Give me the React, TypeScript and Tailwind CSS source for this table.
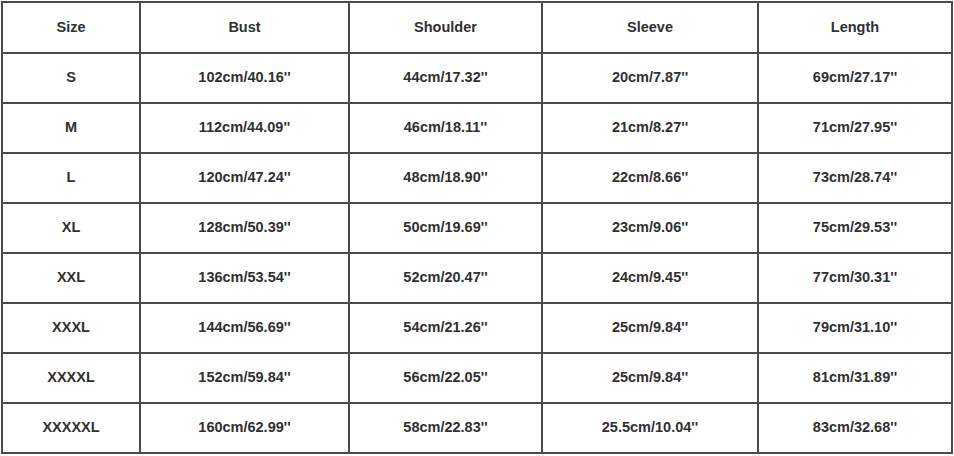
const headers = ["Size", "Bust", "Shoulder", "Sleeve", "Length"];

const rows = [
  ["S", "102cm/40.16''", "44cm/17.32''", "20cm/7.87''", "69cm/27.17''"],
  ["M", "112cm/44.09''", "46cm/18.11''", "21cm/8.27''", "71cm/27.95''"],
  ["L", "120cm/47.24''", "48cm/18.90''", "22cm/8.66''", "73cm/28.74''"],
  ["XL", "128cm/50.39''", "50cm/19.69''", "23cm/9.06''", "75cm/29.53''"],
  ["XXL", "136cm/53.54''", "52cm/20.47''", "24cm/9.45''", "77cm/30.31''"],
  ["XXXL", "144cm/56.69''", "54cm/21.26''", "25cm/9.84''", "79cm/31.10''"],
  ["XXXXL", "152cm/59.84''", "56cm/22.05''", "25cm/9.84''", "81cm/31.89''"],
  ["XXXXXL", "160cm/62.99''", "58cm/22.83''", "25.5cm/10.04''", "83cm/32.68''"],
];

function Cell({ children, head }: { children: React.ReactNode; head?: boolean }) {
  return (
    <div
      className={
        (head ? "h-[49px] pt-[1px] " : "h-[48px] ") +
        "bg-white flex items-center justify-center text-[14.5px] font-bold text-[#303030]"
      }
    >
      {children}
    </div>
  );
}

export default function App() {
  return (
    <div className="w-[954px] h-[456px] bg-white font-['Liberation_Sans',Arial,sans-serif] pt-[1px] pl-[1px]">
      <div className="grid w-fit grid-cols-[136px_207px_191px_214px_192px] gap-[2px] p-[2px] bg-[#4a4a4a]">
        {headers.map((h) => (
          <Cell key={h} head>
            {h}
          </Cell>
        ))}
        {rows.map((row) =>
          row.map((value, i) => <Cell key={row[0] + i}>{value}</Cell>)
        )}
      </div>
    </div>
  );
}
